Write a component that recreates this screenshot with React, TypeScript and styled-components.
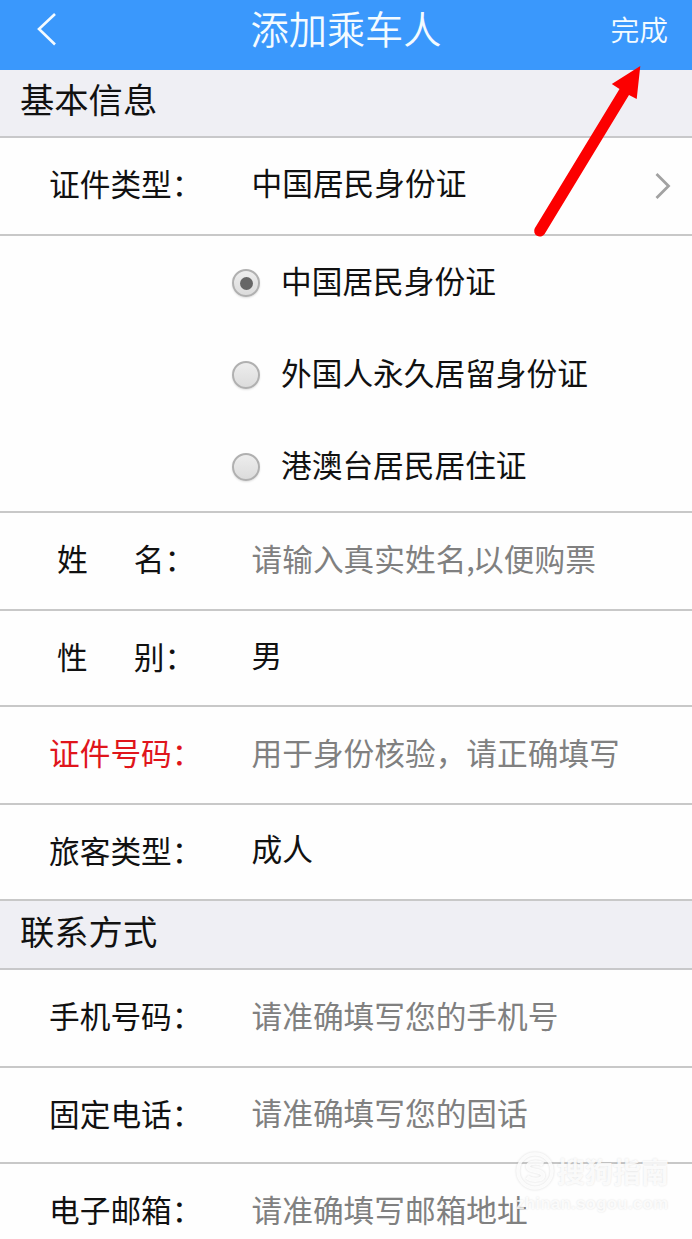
import React from 'react';
import styled, { createGlobalStyle } from 'styled-components';

const GlobalStyle = createGlobalStyle`
  * { box-sizing: border-box; }
  body {
    margin: 0;
    background: #fefefe;
    color: #111;
    font-family: "Noto Sans CJK SC", "Noto Sans", sans-serif;
  }
`;

const Page = styled.main`
  position: relative;
  width: 692px;
  height: 1239px;
  overflow: hidden;
  display: flex;
  flex-direction: column;
`;

const Header = styled.header`
  flex: none;
  height: 70px;
  padding: 0 24px 12px 36px;
  display: grid;
  grid-template-columns: 1fr auto 1fr;
  align-items: center;
  background: #3a98fc;
  color: #f4fbff;
`;

const BackButton = styled.button`
  justify-self: start;
  display: flex;
  padding: 0;
  border: 0;
  background: none;
  color: inherit;
`;

const Title = styled.h1`
  margin: 0;
  padding: 0 12px 2px 0;
  font-size: 38.2px;
  line-height: 54px;
  font-weight: 350;
`;

const DoneButton = styled.button`
  justify-self: end;
  padding: 0;
  border: 0;
  background: none;
  color: inherit;
  font: 350 28.8px/56px "Noto Sans CJK SC", sans-serif;
`;

const SectionTitle = styled.h2<{ $height: number; $line: number }>`
  flex: none;
  height: ${(p) => p.$height}px;
  margin: 0;
  padding: 0 20px;
  border-bottom: 2px solid #c8c8ca;
  background: #efeff4;
  font-size: 34.3px;
  line-height: ${(p) => p.$line}px;
  font-weight: 400;
`;

const Row = styled.div<{ $height: number }>`
  flex: none;
  height: ${(p) => p.$height}px;
  padding: 0 21px 0 49px;
  border-bottom: 2px solid #c8c8c8;
  display: grid;
  grid-template-columns: 202.5px 1fr auto;
  align-items: center;
  font-size: 30.7px;
  line-height: 44px;
  white-space: pre;
`;

const Label = styled.span<{ $required?: boolean; $lift?: number }>`
  padding-bottom: ${(p) => p.$lift ?? 6}px;
  color: ${(p) => (p.$required ? '#e0151b' : 'inherit')};
`;

const SpacedLabel = styled(Label)`
  display: flex;
  padding-left: 8px;
  gap: 46px;
`;

const Value = styled.span<{ $lift?: number }>`
  padding-bottom: ${(p) => p.$lift ?? 8}px;
`;

const Placeholder = styled(Value)`
  color: #808080;
`;

const Comma = styled.span`
  letter-spacing: -1.8px;
`;

const Options = styled.div`
  flex: none;
  height: 277px;
  padding: 1px 0 0 232px;
  border-bottom: 2px solid #c8c8c8;
`;

const Option = styled.label`
  height: 92px;
  display: flex;
  align-items: center;
  gap: 21px;
  font-size: 30.7px;
  line-height: 44px;
`;

const OptionText = styled.span`
  padding-bottom: 6px;
`;

const Radio = styled.span`
  width: 28px;
  height: 28px;
  border: 2px solid #b0b0b0;
  border-radius: 50%;
  display: flex;
  align-items: center;
  justify-content: center;
  background: linear-gradient(#ededed, #dcdcdc);
  box-shadow: 0 1px 2px rgba(0, 0, 0, 0.12);
`;

const Dot = styled.span`
  width: 13px;
  height: 13px;
  border-radius: 50%;
  background: #666;
`;

const Pointer = styled.svg`
  position: absolute;
  left: 530px;
  top: 60px;
`;

const Watermark = styled.div`
  position: absolute;
  left: 515px;
  top: 1151px;
  width: 160px;
  color: rgba(255, 255, 255, 0.85);
  text-shadow: 0 0 2px rgba(0, 0, 0, 0.13);
`;

const Brand = styled.div`
  display: flex;
  align-items: center;
  gap: 2px;
  font-size: 28px;
  line-height: 40px;
  font-weight: 700;
`;

const BrandMark = styled.svg`
  flex: none;
  filter: drop-shadow(0 0 1px rgba(0, 0, 0, 0.16));
`;

const Site = styled.div`
  padding: 1px 0 0 1px;
  font: 700 17px/24px "Liberation Sans", sans-serif;
  letter-spacing: 0.2px;
`;

const options = ['中国居民身份证', '外国人永久居留身份证', '港澳台居民居住证'];

export default function App() {
  return (
    <Page>
      <GlobalStyle />
      <Header>
        <BackButton aria-label="返回">
          <svg width="22" height="34" viewBox="0 0 22 34" fill="none" stroke="currentColor" strokeWidth="2.6">
            <path d="M19 2 3 17 19 32.500" />
          </svg>
        </BackButton>
        <Title>添加乘车人</Title>
        <DoneButton>完成</DoneButton>
      </Header>

      <SectionTitle $height={68} $line={57}>基本信息</SectionTitle>
      <Row $height={98}>
        <Label>证件类型：</Label>
        <Value>中国居民身份证</Value>
        <svg width="16" height="28" viewBox="0 0 16 28" fill="none" stroke="#a2a2a2" strokeWidth="2.8">
          <path d="M1.500 2 13.500 14 1.500 26" />
        </svg>
      </Row>
      <Options>
        {options.map((text, i) => (
          <Option key={text}>
            <Radio>{i === 0 && <Dot />}</Radio>
            <OptionText>{text}</OptionText>
          </Option>
        ))}
      </Options>
      <Row $height={98}>
        <SpacedLabel $lift={7}>
          <span>姓</span>
          <span>名：</span>
        </SpacedLabel>
        <Placeholder $lift={6}>请输入真实姓名<Comma>,</Comma>以便购票</Placeholder>
      </Row>
      <Row $height={96}>
        <SpacedLabel $lift={5}>
          <span>性</span>
          <span>别：</span>
        </SpacedLabel>
        <Value>男</Value>
      </Row>
      <Row $height={98}>
        <Label $required $lift={7}>证件号码：</Label>
        <Placeholder $lift={6}>用于身份核验，请正确填写</Placeholder>
      </Row>
      <Row $height={96}>
        <Label $lift={5}>旅客类型：</Label>
        <Value>成人</Value>
      </Row>

      <SectionTitle $height={69} $line={59}>联系方式</SectionTitle>
      <Row $height={98}>
        <Label $lift={7}>手机号码：</Label>
        <Placeholder $lift={6}>请准确填写您的手机号</Placeholder>
      </Row>
      <Row $height={96}>
        <Label $lift={5}>固定电话：</Label>
        <Placeholder $lift={7}>请准确填写您的固话</Placeholder>
      </Row>
      <Row $height={98}>
        <Label>电子邮箱：</Label>
        <Placeholder $lift={6}>请准确填写邮箱地址</Placeholder>
      </Row>

      <Pointer width="120" height="182" viewBox="530 60 120 182" fill="#fc0000" aria-hidden="true">
        <path d="M640.3 66 611.8 84 619.5 89 534.8 228.2A5.7 5.7 0 0 0 544.6 234L629 95 636.7 99Z" />
      </Pointer>
      <Watermark>
        <Brand>
          <BrandMark width="40" height="40" viewBox="0 0 40 40" fill="none" stroke="rgba(255,255,255,.85)">
            <circle cx="20" cy="20" r="17" strokeWidth="3.5" />
            <path d="M28 13.5C23 10.5 13 11 13 15.5C13 21 28 18.500 28 24.500C28 29.500 17 30 12 26" strokeWidth="4.500" />
          </BrandMark>
          搜狗指南
        </Brand>
        <Site>zhinan.sogou.com</Site>
      </Watermark>
    </Page>
  );
}
